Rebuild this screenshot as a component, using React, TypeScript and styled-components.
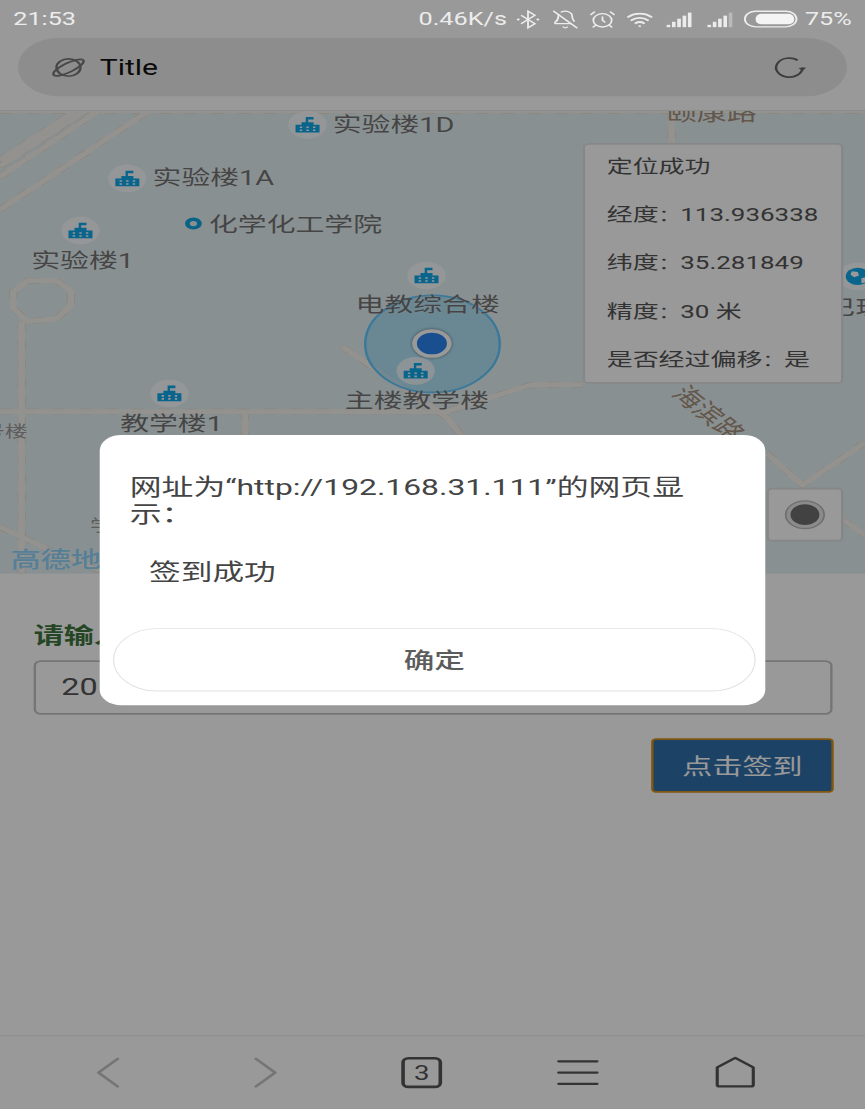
import React from "react";
import styled, { createGlobalStyle } from "styled-components";
import { AlarmClock, BellOff, Wifi } from "lucide-react";

// the phone renders at 720x1280, the picture squeezes that into 865x1109
const Global = createGlobalStyle`
  html, body { margin: 0; padding: 0; width: 865px; height: 1109px; overflow: hidden; background: #fff; }
`;

const font = `Roboto, "Noto Sans CJK SC", sans-serif`;

const Frame = styled.div`
  width: 865px;
  height: 1109px;
  overflow: hidden;
`;

const Stage = styled.div`
  position: relative;
  width: 720px;
  height: 1280px;
  display: flex;
  flex-direction: column;
  transform: scale(calc(865 / 720), calc(1109 / 1280));
  transform-origin: 0 0;
  background: #fff;
  font-family: ${font};
  overflow: hidden;
`;

const Scrim = styled.div`
  position: absolute;
  inset: 0;
  z-index: 1;
  background: rgba(0, 0, 0, 0.4);
`;

const StatusBar = styled.div`
  position: relative;
  z-index: 2;
  height: 44px;
  flex: none;
  display: flex;
  align-items: center;
  justify-content: space-between;
  padding: 0 11px 0 11px;
  color: #ececec;
  font-size: 21px;
`;

const StatusRight = styled.div`
  display: flex;
  align-items: center;
  gap: 8px;
  svg { width: 23px; height: 23px; flex: none; }
`;

const Speed = styled.span`
  margin-right: -2px;
`;

const SignalSlot = styled.span<{ $gap: number }>`
  display: flex;
  margin-left: ${(p) => p.$gap}px;
`;

const TopBar = styled.div`
  flex: none;
  height: 84px;
  padding: 0 15px 17px;
  box-sizing: border-box;
  border-bottom: 1px solid #e4e4e4;
`;

const AddressPill = styled.div`
  height: 67px;
  border-radius: 34px;
  background: #ececec;
  display: flex;
  align-items: center;
  padding: 0 32px 0 27px;
  gap: 11px;
`;

const PageTitle = styled.span`
  flex: 1;
  font-size: 25px;
  color: #111;
`;

const MapArea = styled.div`
  position: relative;
  flex: none;
  height: 534px;
  background: #e3f0f3;
  overflow: hidden;
`;

const Roads = styled.svg`
  position: absolute;
  inset: 0;
  width: 720px;
  height: 534px;
`;

const Marker = styled.span<{ $x: number; $y: number }>`
  position: absolute;
  left: ${(p) => p.$x - 16}px;
  top: ${(p) => p.$y - 15}px;
  width: 32px;
  height: 32px;
  border-radius: 50%;
  background: rgba(255, 255, 255, 0.72);
  display: flex;
  align-items: center;
  justify-content: center;
  svg { width: 24px; height: 24px; }
`;

const MapLabel = styled.span<{ $x: number; $y: number }>`
  position: absolute;
  left: ${(p) => p.$x}px;
  top: ${(p) => p.$y - 15}px;
  line-height: 34px;
  font-size: 24px;
  color: #747474;
  white-space: nowrap;
  text-shadow: 0 0 2px rgba(255, 255, 255, 0.6);
`;

const SmallLabel = styled(MapLabel)`
  font-size: 19px;
  color: #9a9a9a;
`;

const RoadName = styled(MapLabel)<{ $angle?: number }>`
  color: #a58f7c;
  font-size: 25px;
  transform: rotate(${(p) => p.$angle ?? 0}deg);
  transform-origin: left center;
`;

const MapLogo = styled(MapLabel)`
  color: #8fd4fb;
  font-weight: 500;
  font-size: 25px;
`;

const PoiDot = styled.span<{ $x: number; $y: number }>`
  position: absolute;
  left: ${(p) => p.$x - 7}px;
  top: ${(p) => p.$y - 7}px;
  width: 14px;
  height: 14px;
  box-sizing: border-box;
  border: 4px solid #12a5e2;
  border-radius: 50%;
`;

const AccuracyRing = styled.div`
  position: absolute;
  left: 303px;
  top: 212px;
  width: 114px;
  height: 114px;
  box-sizing: border-box;
  border-radius: 50%;
  border: 2px solid #60c8ff;
  background: rgba(60, 200, 255, 0.3);
`;

const LocationDot = styled.div`
  position: absolute;
  left: 343px;
  top: 252px;
  width: 33px;
  height: 33px;
  box-sizing: border-box;
  border-radius: 50%;
  border: 4px solid #fff;
  background: #2a83ee;
  box-shadow: 0 0 3px rgba(0, 0, 0, 0.5);
`;

const InfoBox = styled.div`
  position: absolute;
  left: 485px;
  top: 37px;
  width: 217px;
  height: 278px;
  box-sizing: border-box;
  padding-left: 18px;
  background: #fff;
  border: 2px solid #e2e2e2;
  border-radius: 5px;
  font-size: 21.6px;
  color: #555;
  display: flex;
  flex-direction: column;
  justify-content: center;
`;

const InfoRow = styled.div`
  line-height: 55px;
  white-space: nowrap;
`;

const Colon = styled.span`
  font-size: 18px;
`;

const LocateButton = styled.div`
  position: absolute;
  left: 638px;
  top: 435px;
  width: 64px;
  height: 62px;
  box-sizing: border-box;
  background: #fff;
  border: 2px solid #e0e0e0;
  border-radius: 5px;
  display: flex;
  align-items: center;
  justify-content: center;
`;

const Form = styled.div`
  flex: 1;
  display: flex;
  flex-direction: column;
  padding: 54px 27px 0 28px;
`;

const FieldLabel = styled.label`
  font-size: 25px;
  font-weight: 700;
  color: #3c763d;
  line-height: 36px;
`;

const Field = styled.div`
  height: 63px;
  margin-top: 10px;
  box-sizing: border-box;
  border: 2px solid #c4c4c4;
  border-radius: 6px;
  padding: 0 0 2px 21px;
  display: flex;
  align-items: center;
  font-size: 27px;
  color: #555;
`;

const SubmitButton = styled.button`
  align-self: flex-end;
  width: 152px;
  height: 63px;
  margin: 27px -1px 0 0;
  padding: 0 0 4px;
  border: 2px solid #d8901a;
  border-radius: 4px;
  background: #2f6eaa;
  color: #fff;
  font-family: ${font};
  font-size: 25px;
`;

const BottomNav = styled.nav`
  flex: none;
  height: 85px;
  box-sizing: border-box;
  border-top: 1px solid #e6e6e6;
  padding: 0 43px 0 25px;
  display: grid;
  grid-template-columns: repeat(5, 1fr);
  align-items: center;
  justify-items: center;
`;

const NavIcon = styled.svg<{ $muted?: boolean }>`
  width: 36px;
  height: 38px;
  fill: none;
  stroke: ${(p) => (p.$muted ? "#c4c4c4" : "#555")};
  stroke-width: 2.6;
  stroke-linejoin: round;
  stroke-linecap: round;
`;

const TabCount = styled.span`
  width: 34px;
  height: 36px;
  box-sizing: border-box;
  border: 3px solid #555;
  border-radius: 6px;
  display: flex;
  align-items: center;
  justify-content: center;
  font-size: 23px;
  color: #555;
`;

const Dialog = styled.div`
  position: absolute;
  z-index: 2;
  left: 83px;
  top: 502px;
  width: 554px;
  height: 312px;
  box-sizing: border-box;
  padding: 44px 8px 16px 11px;
  background: #fff;
  border-radius: 18px;
  display: flex;
  flex-direction: column;
  color: #444;
`;

const DialogTitle = styled.div`
  padding: 0 20px 0 14px;
  font-size: 26.5px;
  line-height: 32px;
`;

const DialogMessage = styled.div`
  flex: 1;
  padding: 33px 0 0 30px;
  font-size: 26.4px;
  line-height: 36px;
`;

const DialogButton = styled.button`
  width: 535px;
  height: 73px;
  flex: none;
  box-sizing: border-box;
  padding: 0 0 4px;
  border: 1.5px solid #e2e2e2;
  border-radius: 37px;
  background: #fff;
  color: #5c5c5c;
  font-family: ${font};
  font-size: 25.5px;
  font-weight: 500;
`;

function BuildingIcon() {
  return (
    <svg viewBox="0 0 24 24" aria-hidden>
      <path
        fill="#10a8ea"
        fillRule="evenodd"
        d="M10.5 3h6.5v3h-4.5v3H17v3h5v9H2v-9h5V9h3.5V3zM5.5 14v1.8h2V14h-2zm5.5 0v1.8h2V14h-2zm5.5 0v1.8h2V14h-2zM5.5 17.5v1.8h2v-1.8h-2zm5.5 0v1.8h2v-1.8h-2zm5.5 0v1.8h2v-1.8h-2z"
      />
    </svg>
  );
}

function GlobeIcon() {
  return (
    <svg viewBox="0 0 24 24" aria-hidden>
      <circle cx="12" cy="12" r="10" fill="#10a8ea" />
      <path fill="#fff" d="M7 6l5 1 1 4-4 2-3-3zM15 14l5-1-2 6-3 1z" />
    </svg>
  );
}

function BluetoothIcon() {
  return (
    <svg viewBox="0 0 24 24" fill="none" stroke="#ececec" strokeWidth="1.6" aria-hidden>
      <path d="M6 7l12 10-6 5V2l6 5L6 17" />
      <circle cx="3.5" cy="12" r="1.3" fill="#ececec" stroke="none" />
      <circle cx="20.5" cy="12" r="1.3" fill="#ececec" stroke="none" />
    </svg>
  );
}

function SignalIcon({ bars }: { bars: number }) {
  return (
    <svg viewBox="0 0 26 24" aria-hidden>
      {[0, 1, 2, 3, 4].map((i) => (
        <rect
          key={i}
          x={1 + i * 5}
          y={19 - i * 4}
          width="3.4"
          height={3 + i * 4}
          fill="#ececec"
          opacity={i < bars ? 1 : 0.4}
        />
      ))}
    </svg>
  );
}

const BatterySvg = styled.svg`
  && { width: 46px; height: 22px; margin-right: -3px; }
`;

function BatteryIcon() {
  return (
    <BatterySvg viewBox="0 0 46 22" aria-hidden>
      <rect x="1" y="2" width="43" height="18" rx="9" fill="none" stroke="#ececec" strokeWidth="1.6" />
      <rect x="10" y="5" width="32" height="12" rx="5" fill="#f4f4f4" />
    </BatterySvg>
  );
}

const roads = [
  "M0 57L64 -1",
  "M0 64L72 -1",
  "M0 76L83 -1",
  "M0 114L125 -1",
  "M0 0H720",
  "M23 196H47L59 208V225L47 240L23 243L11 228V209Z",
  "M18 243V534",
  "M0 347H372L433 320L443 316H485",
  "M285 272L372 354L387 380",
  "M204 347V380",
  "M559 0V37",
  "M638 395L668 432L720 383",
  "M702 472L720 490",
  "M0 480L46 510L90 534",
];

const markers = [
  { x: 256, y: 15 },
  { x: 106, y: 77 },
  { x: 67, y: 137 },
  { x: 355, y: 189 },
  { x: 346, y: 299 },
  { x: 141, y: 325 },
];

const labels = [
  { x: 277, y: 14, text: "实验楼1D" },
  { x: 127, y: 76, text: "实验楼1A" },
  { x: 174, y: 130, text: "化学化工学院" },
  { x: 26, y: 171, text: "实验楼1" },
  { x: 296, y: 222, text: "电教综合楼" },
  { x: 287, y: 333, text: "主楼教学楼" },
  { x: 100, y: 360, text: "教学楼1" },
  { x: 688, y: 225, text: "巴理" },
];

export default function App() {
  return (
    <Frame>
      <Global />
      <Stage>
        <StatusBar>
          <span>21:53</span>
          <StatusRight>
            <Speed>0.46K/s</Speed>
            <BluetoothIcon />
            <BellOff strokeWidth={1.6} />
            <AlarmClock strokeWidth={1.6} />
            <Wifi strokeWidth={2.2} />
            <SignalSlot $gap={2}>
              <SignalIcon bars={5} />
            </SignalSlot>
            <SignalSlot $gap={3}>
              <SignalIcon bars={4} />
            </SignalSlot>
            <BatteryIcon />
            <span>75%</span>
          </StatusRight>
        </StatusBar>

        <TopBar>
          <AddressPill>
            <svg width="30" height="30" viewBox="0 0 30 30" fill="none" stroke="#777" strokeWidth="2">
              <circle cx="15" cy="15" r="10" />
              <ellipse cx="15" cy="15" rx="15" ry="5" transform="rotate(-35 15 15)" />
            </svg>
            <PageTitle>Title</PageTitle>
            <svg width="30" height="30" viewBox="0 0 30 30" fill="none" stroke="#666" strokeWidth="2">
              <path d="M25 15a11 11 0 1 1-4-8.5" />
              <path d="M21.5 15.5l3.5 3.5 3-4z" fill="#666" stroke="none" />
            </svg>
          </AddressPill>
        </TopBar>

        <MapArea>
          <Roads viewBox="0 0 720 534" fill="none" strokeLinejoin="round">
            {roads.map((d) => (
              <path key={d} d={d} stroke="#e4d6c6" strokeWidth="6.5" strokeDasharray="10 12" />
            ))}
            {roads.map((d) => (
              <path key={d} d={d} stroke="#f6f3ee" strokeWidth="5.5" />
            ))}
          </Roads>
          <RoadName $x={555} $y={1}>颐康路</RoadName>
          <RoadName $x={564} $y={320} $angle={48}>海滨路</RoadName>
          <SmallLabel $x={-15} $y={368}>号楼</SmallLabel>
          <SmallLabel $x={75} $y={477}>学</SmallLabel>
          <MapLogo $x={9} $y={516}>高德地图</MapLogo>

          <AccuracyRing />
          {markers.map((m) => (
            <Marker key={m.x} $x={m.x} $y={m.y}>
              <BuildingIcon />
            </Marker>
          ))}
          <Marker $x={714} $y={190}>
            <GlobeIcon />
          </Marker>
          <PoiDot $x={161} $y={130} />
          {labels.map((l) => (
            <MapLabel key={l.text} $x={l.x} $y={l.y}>
              {l.text}
            </MapLabel>
          ))}
          <LocationDot />

          <InfoBox>
            <InfoRow>定位成功</InfoRow>
            <InfoRow>经度<Colon>：</Colon>113.936338</InfoRow>
            <InfoRow>纬度<Colon>：</Colon>35.281849</InfoRow>
            <InfoRow>精度<Colon>：</Colon>30 米</InfoRow>
            <InfoRow>是否经过偏移<Colon>：</Colon>是</InfoRow>
          </InfoBox>

          <LocateButton>
            <svg width="36" height="36" viewBox="0 0 36 36">
              <circle cx="18" cy="18" r="16" fill="#e8e8e8" stroke="#bbb" strokeWidth="1.5" />
              <circle cx="18" cy="18" r="12" fill="#6e6e6e" />
            </svg>
          </LocateButton>
        </MapArea>

        <Form>
          <FieldLabel>请输入学号</FieldLabel>
          <Field>2014</Field>
          <SubmitButton>点击签到</SubmitButton>
        </Form>

        <BottomNav>
          <NavIcon $muted viewBox="0 0 36 38">
            <path d="M26 3L10 19l16 16" />
          </NavIcon>
          <NavIcon $muted viewBox="0 0 36 38">
            <path d="M10 3l16 16L10 35" />
          </NavIcon>
          <TabCount>3</TabCount>
          <NavIcon viewBox="0 0 36 38">
            <path d="M2 6h32M2 19h32M2 32h32" />
          </NavIcon>
          <NavIcon viewBox="0 0 36 38">
            <path d="M18 2L33 13v20a2 2 0 0 1-2 2H5a2 2 0 0 1-2-2V13z" />
          </NavIcon>
        </BottomNav>

        <Scrim />

        <Dialog>
          <DialogTitle>网址为“http://192.168.31.111”的网页显示：</DialogTitle>
          <DialogMessage>签到成功</DialogMessage>
          <DialogButton>确定</DialogButton>
        </Dialog>
      </Stage>
    </Frame>
  );
}
